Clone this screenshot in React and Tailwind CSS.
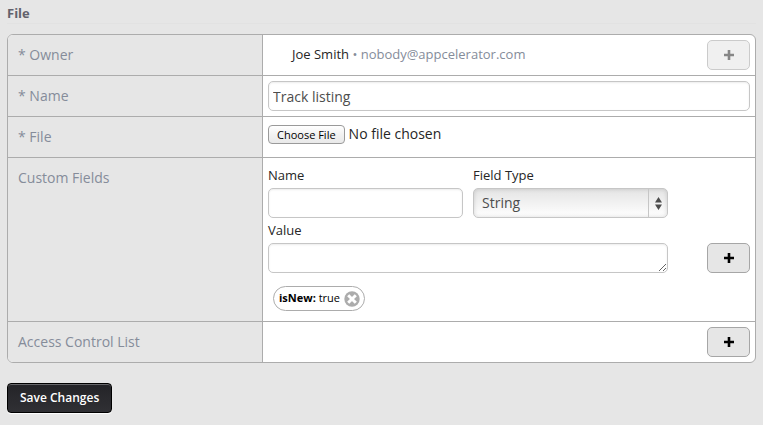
import React from "react";

const fieldClass =
  "block h-[30px] rounded-[5px] border border-[#c6c6c6] bg-white px-1 text-sm text-[#4d4d4d] shadow-[inset_0_1px_2px_rgba(0,0,0,0.08)] outline-none";

function PlusIcon() {
  return (
    <svg viewBox="0 0 10 10" className="h-[10px] w-[10px]" fill="currentColor" aria-hidden="true">
      <path d="M3.7 0h2.6v3.7H10v2.6H6.3V10H3.7V6.3H0V3.7h3.7z" />
    </svg>
  );
}

function AddButton({ label, disabled }) {
  return (
    <button
      type="button"
      aria-label={label}
      disabled={disabled}
      className="flex h-[30px] w-[43px] shrink-0 items-center justify-center rounded-[5px] border border-[#a6a6a6] bg-[#e6e6e6] text-black disabled:border-[#cbcbcb] disabled:bg-[#f0f0f0] disabled:text-[#868686]"
    >
      <PlusIcon />
    </button>
  );
}

function Row({ label, htmlFor, children }) {
  const labelClass =
    "w-[255px] shrink-0 border-r border-[#acacac] bg-[#e6e6e6] px-[10px] text-sm leading-10 text-[#858c9a]";
  return (
    <div className="flex min-h-10">
      {htmlFor ? (
        <label htmlFor={htmlFor} className={labelClass}>
          {label}
        </label>
      ) : (
        <div className={labelClass}>{label}</div>
      )}
      <div className="min-w-0 flex-1 p-[5px]">{children}</div>
    </div>
  );
}

export default function App() {
  return (
    <main className="min-h-screen bg-[#e6e6e6] px-[7px] pt-1 font-['Open_Sans',sans-serif] text-[13px] text-[#262626]">
      <h1 className="border-b border-[#e2e2e2] text-[13px] leading-[19px] font-bold text-[#62626c]">File</h1>
      <form className="pt-[10px]" onSubmit={(e) => e.preventDefault()}>
        <div className="divide-y divide-[#acacac] overflow-hidden rounded-md border border-[#acacac] bg-white">
          <Row label="* Owner">
            <div className="flex items-center justify-between pl-6">
              <p>
                Joe Smith <span className="text-[#858c9a]">• nobody@appcelerator.com</span>
              </p>
              <AddButton label="Choose owner" disabled />
            </div>
          </Row>

          <Row label="* Name" htmlFor="file-name">
            <input id="file-name" type="text" defaultValue="Track listing" className={fieldClass + " w-full"} />
          </Row>

          <Row label="* File" htmlFor="file-upload">
            <input
              id="file-upload"
              type="file"
              className="block w-full text-sm leading-6 file:mr-1 file:h-[19px] file:rounded-[4px] file:border file:border-[#9a9a9a] file:bg-linear-to-b file:from-white file:via-[#f2f2f2] file:to-[#e9e9e9] file:px-2 file:text-[11px] file:leading-[17px] file:text-black"
            />
          </Row>

          <Row label="Custom Fields">
            <div className="flex items-end justify-between">
              <div className="w-[400px]">
                <div className="grid grid-cols-2 gap-x-[10px]">
                  <div>
                    <label htmlFor="field-name" className="block leading-[25px]">
                      Name
                    </label>
                    <input id="field-name" type="text" className={fieldClass + " w-full"} />
                  </div>
                  <div>
                    <label htmlFor="field-type" className="block leading-[25px]">
                      Field Type
                    </label>
                    <div className="relative">
                      <select
                        id="field-type"
                        defaultValue="String"
                        className="block h-[30px] w-full appearance-none rounded-[5px] border border-[#c6c6c6] bg-linear-to-b from-[#e4e4e4] to-white pr-6 pl-2 text-sm text-[#4d4d4d] shadow-[inset_0_0_4px_rgba(0,0,0,0.15)] outline-none"
                      >
                        <option>String</option>
                        <option>Number</option>
                        <option>Boolean</option>
                      </select>
                      <span className="pointer-events-none absolute inset-y-px right-px flex w-[19px] items-center justify-center border-l border-[#c6c6c6]">
                        <svg viewBox="0 0 7 13" className="h-[13px] w-[7px]" fill="#4d4d4d" aria-hidden="true">
                          <path d="M3.5 0L7 5.5H0zM0 7.5h7L3.5 13z" />
                        </svg>
                      </span>
                    </div>
                  </div>
                </div>
                <label htmlFor="field-value" className="block leading-[25px]">
                  Value
                </label>
                <textarea id="field-value" rows={1} className={fieldClass + " w-full resize overflow-hidden"} />
              </div>
              <AddButton label="Add custom field" />
            </div>
            <div className="px-[5px] pt-[13px] pb-[5px]">
              <span className="inline-flex h-[25px] items-center gap-1 rounded-full border border-[#acacac] bg-white pr-1 pl-[5px] align-top text-[11px] text-black">
                <span>
                  <b>isNew:</b> true
                </span>
                <button type="button" aria-label="Remove isNew">
                  <svg viewBox="0 0 16 16" className="block h-4 w-4" aria-hidden="true">
                    <circle cx="8" cy="8" r="7.7" fill="#acacac" />
                    <path d="M4.2 4.2l7.6 7.6M11.8 4.2l-7.6 7.6" stroke="#fff" strokeWidth="3" />
                  </svg>
                </button>
              </span>
            </div>
          </Row>

          <Row label="Access Control List">
            <div className="flex justify-end">
              <AddButton label="Add access control list" />
            </div>
          </Row>
        </div>

        <button
          type="submit"
          className="mt-5 h-[30px] rounded-[4px] border border-black bg-linear-to-b from-[#242428] to-[#303034] px-3 text-xs font-semibold text-white shadow-[0_1px_1px_#fff,inset_0_1px_0_#67676b]"
        >
          Save Changes
        </button>
      </form>
    </main>
  );
}
